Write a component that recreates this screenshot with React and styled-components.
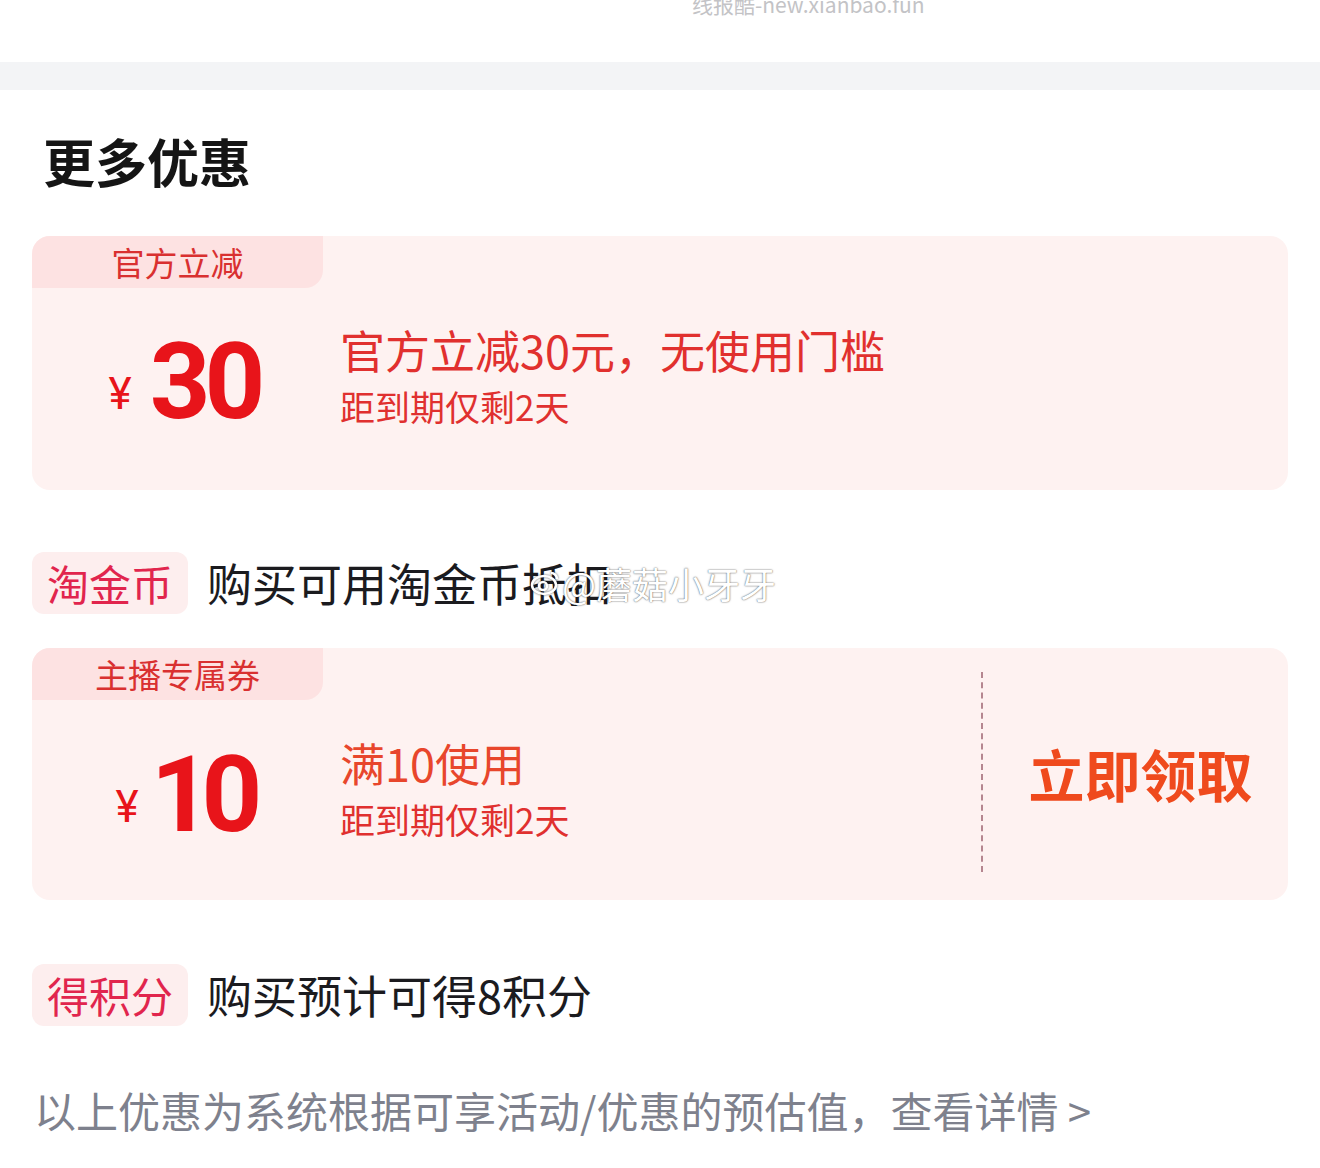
import React from 'react';
import styled, { createGlobalStyle } from 'styled-components';

const GlobalStyle = createGlobalStyle`
  body {
    margin: 0;
    background: #ffffff;
    font-family: "Noto Sans CJK SC", "Noto Sans", sans-serif;
  }
`;

const coupons = [
  {
    tag: '官方立减',
    amount: '30',
    title: '官方立减30元，无使用门槛',
    titleColor: '#e1302e',
    note: '距到期仅剩2天',
    action: null,
  },
  {
    tag: '主播专属券',
    amount: '10',
    title: '满10使用',
    titleColor: '#e8462c',
    note: '距到期仅剩2天',
    action: '立即领取',
  },
];

const App = () => {
  return (
    <Page>
      <GlobalStyle />
      <TopBar>
        <SiteMark>线报酷-new.xianbao.fun</SiteMark>
      </TopBar>
      <Band />
      <Section>
        <Title>更多优惠</Title>
        <Coupon data={coupons[0]} />
        <InfoRow $top={62}>
          <Badge>淘金币</Badge>
          <InfoText>购买可用淘金币抵扣</InfoText>
          <Watermark>
            <svg width='30' height='26' viewBox='0 0 30 26'>
              <ellipse cx='14' cy='15' rx='12' ry='9' fill='none' stroke='#ffffff' strokeWidth='2.5' />
              <circle cx='13' cy='16' r='4' fill='none' stroke='#ffffff' strokeWidth='2.5' />
              <path d='M21 3a6 6 0 0 1 6 6' fill='none' stroke='#ffffff' strokeWidth='2.5' />
            </svg>
            @蘑菇小牙牙
          </Watermark>
        </InfoRow>
        <Spacer $h={34} />
        <Coupon data={coupons[1]} />
        <InfoRow $top={64}>
          <Badge>得积分</Badge>
          <InfoText>购买预计可得8积分</InfoText>
        </InfoRow>
        <Footer>以上优惠为系统根据可享活动/优惠的预估值，查看详情 &gt;</Footer>
      </Section>
    </Page>
  );
};

const Coupon = ({ data }) => {
  const narrow = !!data.action;
  return (
    <Card>
      <CardMain>
        <Tag>{data.tag}</Tag>
        <CardBody $action={narrow}>
          <Amount>
            <Yen>¥</Yen>
            <Value $gap={narrow ? 12 : 18} $spacing={narrow ? -10 : -6}>
              {data.amount}
            </Value>
          </Amount>
          <Desc>
            <DescTitle $color={data.titleColor}>{data.title}</DescTitle>
            <DescNote>{data.note}</DescNote>
          </Desc>
        </CardBody>
      </CardMain>
      {data.action && (
        <>
          <Divider />
          <Action>{data.action}</Action>
        </>
      )}
    </Card>
  );
};

export default App;

const Page = styled.div`
  width: 1320px;
  min-height: 1168px;
  background: #ffffff;
`;

const TopBar = styled.div`
  height: 62px;
  padding-left: 692px;
  overflow: hidden;
`;

const SiteMark = styled.div`
  margin-top: -9px;
  font-size: 21px;
  line-height: 26px;
  color: #c3c3c6;
  font-family: "Noto Sans CJK SC", "Open Sans", sans-serif;
`;

const Band = styled.div`
  height: 28px;
  background: #f3f4f6;
`;

const Section = styled.div`
  padding: 0 32px;
`;

const Title = styled.h2`
  margin: 0;
  padding: 36px 0 40px 11px;
  font-size: 52px;
  line-height: 70px;
  font-weight: 700;
  color: #151515;
`;

const Card = styled.div`
  display: flex;
  background: #fef2f1;
  border-radius: 18px;
  overflow: hidden;
`;

const CardMain = styled.div`
  flex: 1;
  display: flex;
  flex-direction: column;
`;

const Tag = styled.div`
  width: 291px;
  height: 52px;
  background: #fde2e2;
  border-bottom-right-radius: 18px;
  color: #d93030;
  font-size: 33px;
  line-height: 52px;
  text-align: center;
`;

const CardBody = styled.div`
  height: ${(p) => (p.$action ? 200 : 202)}px;
  display: flex;
  align-items: center;
  padding-bottom: ${(p) => (p.$action ? 10 : 14)}px;
  box-sizing: border-box;
`;

const Amount = styled.div`
  width: 304px;
  display: flex;
  align-items: center;
  justify-content: center;
  color: #e8141a;
`;

const Yen = styled.span`
  padding-top: 24px;
  font-family: Roboto, "Liberation Sans", sans-serif;
  font-size: 44px;
  line-height: 50px;
`;

const Value = styled.span`
  margin-left: ${(p) => p.$gap}px;
  font-family: Roboto, "Liberation Sans", sans-serif;
  font-weight: 700;
  font-size: 106px;
  line-height: 110px;
  letter-spacing: ${(p) => p.$spacing}px;
`;

const Desc = styled.div`
  display: flex;
  flex-direction: column;
  gap: 6px;
  margin: 0 0 14px 4px;
`;

const DescTitle = styled.div`
  font-size: 45px;
  line-height: 56px;
  color: ${(p) => p.$color};
`;

const DescNote = styled.div`
  font-size: 35px;
  line-height: 44px;
  color: #e0302f;
`;

const Divider = styled.div`
  margin: 24px 0 28px;
  border-left: 2px dashed #b58690;
`;

const Action = styled.div`
  width: 305px;
  display: flex;
  align-items: center;
  justify-content: center;
  padding: 0 0 4px 10px;
  box-sizing: border-box;
  font-size: 56px;
  font-weight: 700;
  color: #ef4a1d;
`;

const InfoRow = styled.div`
  position: relative;
  display: flex;
  align-items: center;
  gap: 19px;
  margin-top: ${(p) => p.$top}px;
`;

const Badge = styled.div`
  width: 156px;
  height: 62px;
  border-radius: 12px;
  background: #fdeeee;
  color: #e1254d;
  font-size: 42px;
  line-height: 62px;
  text-align: center;
`;

const InfoText = styled.div`
  font-size: 45px;
  line-height: 62px;
  color: #1b1b1f;
`;

const Watermark = styled.div`
  position: absolute;
  left: 498px;
  top: 11px;
  display: flex;
  align-items: center;
  gap: 2px;
  font-size: 36px;
  line-height: 40px;
  color: #ffffff;
  text-shadow: 0 0 2px rgba(0, 0, 0, 0.55), 0 0 1px rgba(0, 0, 0, 0.4);

  svg {
    filter: drop-shadow(0 0 1px rgba(0, 0, 0, 0.6));
  }
`;

const Spacer = styled.div`
  height: ${(p) => p.$h}px;
`;

const Footer = styled.div`
  margin-top: 54px;
  padding-left: 2px;
  font-size: 42px;
  line-height: 60px;
  color: #7e818d;
`;
